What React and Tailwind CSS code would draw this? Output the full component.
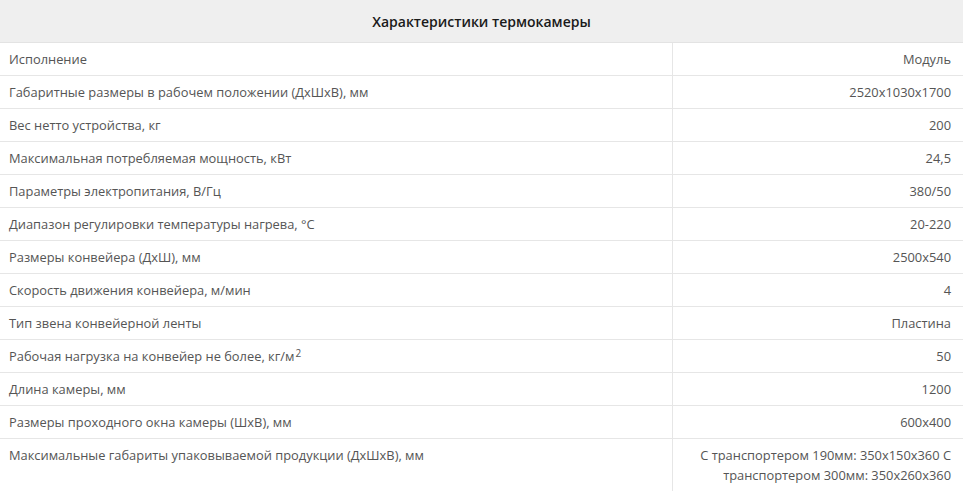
const rows = [
  ['Исполнение', 'Модуль'],
  ['Габаритные размеры в рабочем положении (ДхШхВ), мм', '2520x1030x1700'],
  ['Вес нетто устройства, кг', '200'],
  ['Максимальная потребляемая мощность, кВт', '24,5'],
  ['Параметры электропитания, В/Гц', '380/50'],
  ['Диапазон регулировки температуры нагрева, °C', '20-220'],
  ['Размеры конвейера (ДхШ), мм', '2500x540'],
  ['Скорость движения конвейера, м/мин', '4'],
  ['Тип звена конвейерной ленты', 'Пластина'],
  [<>Рабочая нагрузка на конвейер не более, кг/м<sup className="text-[10px] relative -top-[4px] ml-px">2</sup></>, '50'],
  ['Длина камеры, мм', '1200'],
  ['Размеры проходного окна камеры (ШхВ), мм', '600x400'],
  ['Максимальные габариты упаковываемой продукции (ДхШхВ), мм', 'С транспортером 190мм: 350x150x360 С транспортером 300мм: 350x260x360'],
];

export default function App() {
  return (
    <div className="w-[963px] bg-white font-['Open_Sans',sans-serif] text-[12.87px] text-[#555]">
      <table className="w-full border-collapse table-fixed">
        <colgroup>
          <col className="w-[672px]" />
          <col />
        </colgroup>
        <thead>
          <tr>
            <th colSpan={2} className="h-[42px] bg-[#efefef] text-center text-[14px] font-semibold text-[#1a1a1a] border-b border-[#e3e3e3] pt-px">
              Характеристики термокамеры
            </th>
          </tr>
        </thead>
        <tbody>
          {rows.map((r, i) => (
            <tr key={i} className="border-b border-[#e6e6e6]">
              <td className="align-top pl-[9px] pr-3 py-[6px] leading-[20px] border-r border-[#e6e6e6]">{r[0]}</td>
              <td className="align-top pl-3 pr-[12px] py-[6px] leading-[20px] text-right">{r[1]}</td>
            </tr>
          ))}
        </tbody>
      </table>
    </div>
  );
}
